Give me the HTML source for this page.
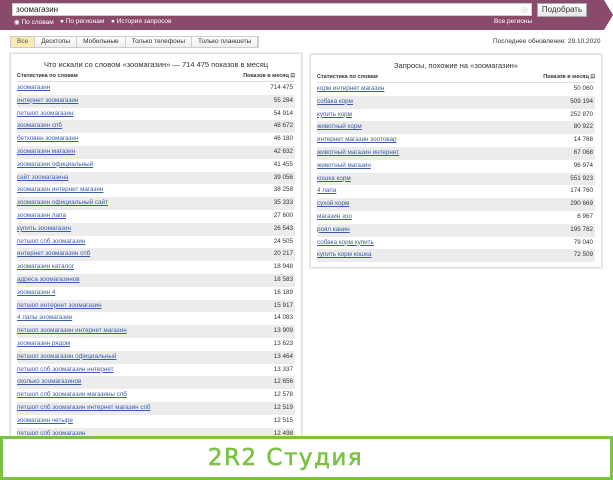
<!DOCTYPE html><html><head><meta charset="utf-8"><style>
*{margin:0;padding:0;box-sizing:border-box}
body{width:613px;height:480px;overflow:hidden;background:#fff;font-family:"Liberation Sans",sans-serif;position:relative;color:#333}
.bar{position:absolute;left:0;top:0;width:604px;height:30px;background:#8a4a6c}
.arr{position:absolute;left:604px;top:0;width:0;height:0;border-top:15px solid transparent;border-bottom:15px solid transparent;border-left:9px solid #8a4a6c}
.inp{position:absolute;left:12px;top:3px;width:520px;height:13px;background:#fff;border:1px solid #ccc;font-size:8px;padding:1px 3px;color:#222}
.btn{position:absolute;left:537px;top:3px;width:50px;height:14px;background:linear-gradient(#fff,#e6e6e6);border:1px solid #aaa;font-size:8px;text-align:center;line-height:12px}
.rad{position:absolute;top:18px;font-size:6.5px;color:#fff}
.tabs{position:absolute;left:10px;top:36px;height:12px;display:flex;border:1px solid #ccc;font-size:6.5px}
.tabs div{padding:0 6px;line-height:10px;border-right:1px solid #ccc;background:linear-gradient(#fff,#eee)}
.tabs div:first-child{background:#fbeab0;color:#555}
.panel{position:absolute;border:1px solid #ddd;box-shadow:0 0 2px #ccc;background:#fff}
.ttl{position:absolute;left:0;right:0;top:6px;text-align:center;font-size:7.5px;color:#333}
.hd{position:absolute;left:6px;right:6px;top:19px;font-size:5.5px;font-weight:bold;border-bottom:1px solid #ddd;height:9px}
.hd span{position:absolute;right:0;top:0}
.row{position:absolute;left:6px;right:6px;height:12.8px;font-size:6.3px;line-height:12.8px}
.row a{color:#3a5aa8;text-decoration:underline}
.row b{position:absolute;right:2px;font-weight:normal;color:#333}
.foot{position:absolute;left:0;top:436px;width:613px;height:44px;background:#fff;border:3px solid #7cc242;text-align:center;padding-right:42px;font-family:"DejaVu Sans",sans-serif;font-size:23px;letter-spacing:1.5px;-webkit-text-stroke:0.6px #7cc242;line-height:38px;color:#7cc242}
</style></head><body>
<div class="bar"></div><div class="arr"></div>
<div class="inp">зоомагазин<span style="position:absolute;right:3px;color:#ccc">◎</span></div>
<div class="btn">Подобрать</div>
<div class="rad" style="left:14px">◉ По словам</div>
<div class="rad" style="left:60px">● По регионам</div>
<div class="rad" style="left:111px">● История запросов</div>
<div class="rad" style="left:494px">Все регионы</div>
<div class="tabs"><div>Все</div><div>Десктопы</div><div>Мобильные</div><div>Только телефоны</div><div>Только планшеты</div></div>
<div style="position:absolute;left:493px;top:38px;font-size:6.5px">Последнее обновление: 29.10.2020</div>
<div class="panel" style="left:10px;top:53px;width:292px;height:400px"><div class="ttl">Что искали со словом «зоомагазин» — 714 475 показов в месяц</div><div class="hd">Статистика по словам<span>Показов в месяц ⊡</span></div>
<div style="position:absolute;left:0;right:0;top:28px">
<div class="row" style="top:0"><a>зоомагазин</a><b>714 475</b></div></div>
<div id="L" style="position:absolute;left:0;right:0;top:40.8px"></div></div>
<div class="panel" style="left:310px;top:54px;width:292px;height:214px"><div class="ttl">Запросы, похожие на «зоомагазин»</div><div class="hd">Статистика по словам<span>Показов в месяц ⊡</span></div>
<div id="R" style="position:absolute;left:0;right:0;top:28px"></div></div>
<div class="foot">2R2 Студия</div>
<script>
function fill(id,d,start){var h='';d.forEach(function(r,i){h+='<div class="row" style="top:'+(i*12.8)+'px;background:'+((i+start)%2?'#ececec':'#fff')+'"><a>'+r[0]+'</a><b>'+r[1]+'</b></div>'});document.getElementById(id).innerHTML=h}
fill('L',[["интернет зоомагазин","55 284"],["петшоп зоомагазин","54 914"],["зоомагазин спб","48 672"],["бетховен зоомагазин","46 180"],["зоомагазин магазин","42 632"],["зоомагазин официальный","41 455"],["сайт зоомагазина","39 056"],["зоомагазин интернет магазин","38 258"],["зоомагазин официальный сайт","35 333"],["зоомагазин лапа","27 600"],["купить зоомагазин","26 543"],["петшоп спб зоомагазин","24 505"],["интернет зоомагазин спб","20 217"],["зоомагазин каталог","18 948"],["адреса зоомагазинов","18 583"],["зоомагазин 4","16 189"],["петшоп интернет зоомагазин","15 917"],["4 лапы зоомагазин","14 083"],["петшоп зоомагазин интернет магазин","13 909"],["зоомагазин рядом","13 623"],["петшоп зоомагазин официальный","13 464"],["петшоп спб зоомагазин интернет","13 337"],["сколько зоомагазинов","12 656"],["петшоп спб зоомагазин магазины спб","12 578"],["петшоп спб зоомагазин интернет магазин спб","12 519"],["зоомагазин четыре","12 515"],["петшоп спб зоомагазин","12 498"]],1);
fill('R',[["корм интернет магазин","50 060"],["собака корм","509 194"],["купить корм","252 870"],["животный корм","80 922"],["интернет магазин зоотовар","14 768"],["животный магазин интернет","67 068"],["животный магазин","96 974"],["кошка корм","551 923"],["4 лапа","174 760"],["сухой корм","290 669"],["магазин зоо","6 967"],["роял канин","195 782"],["собака корм купить","79 040"],["купить корм кошка","72 509"]],0);
</script>
</body></html>
